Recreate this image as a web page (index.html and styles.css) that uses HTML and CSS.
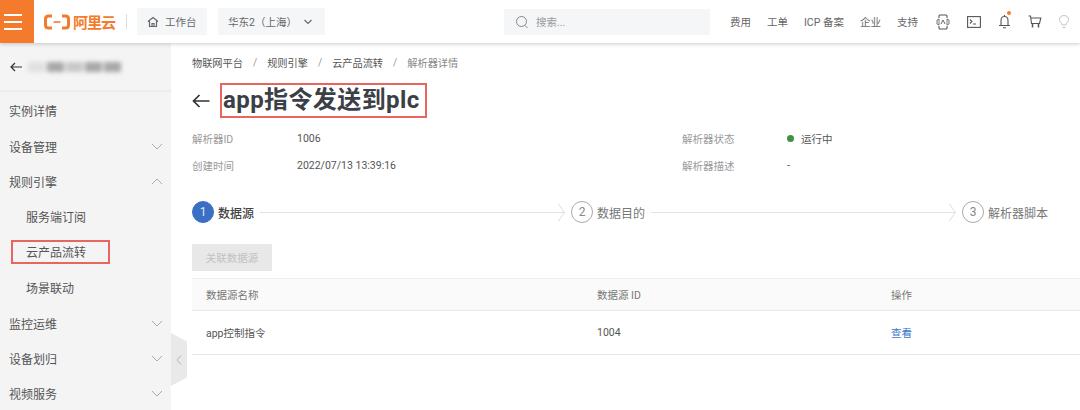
FILE: index.html
```html
<!DOCTYPE html>
<html lang="zh-CN">
<head>
    <meta charset="UTF-8">
    <title>解析器详情</title>
    <link rel="stylesheet" href="styles.css">
</head>
<body>
    <header class="topbar">
        <div class="menu-btn"><span></span><span></span><span></span></div>
        <div class="logo">
            <svg width="26" height="16" viewBox="0 0 26 16" fill="none" stroke="#f47a2c" stroke-width="3">
                <path d="M8 2H4.500Q1.500 2 1.500 5V11Q1.500 14 4.500 14H8"/>
                <path d="M18 2H21.500Q24.500 2 24.500 5V11Q24.500 14 21.500 14H18"/>
                <path d="M9.500 8H16.500" stroke-width="1.600"/>
            </svg>
            <span class="logo-text">阿里云</span>
        </div>
        <div class="logo-sep"></div>
        <div class="top-btn home-btn">
            <svg width="12" height="12" viewBox="0 0 12 12" fill="none" stroke="#666" stroke-width="1.200">
                <path d="M1 5.500L6 1.500L11 5.500M2.500 5V10.500H9.500V5M5 10.500V7.500H7V10.500"/>
            </svg>
            <span>工作台</span>
        </div>
        <div class="top-btn region-btn">
            <span>华东2（上海）</span>
            <svg width="10" height="6" viewBox="0 0 10 6" fill="none" stroke="#666" stroke-width="1.100"><path d="M1.500 1L5 4.500L8.500 1"/></svg>
        </div>
        <div class="search">
            <svg width="14" height="14" viewBox="0 0 14 14" fill="none" stroke="#888" stroke-width="1"><circle cx="6.500" cy="6.500" r="5"/><path d="M10 10.500L12.500 13"/></svg>
            <span>搜索...</span>
        </div>
        <nav class="top-links">
            <span>费用</span>
            <span>工单</span>
            <span>ICP 备案</span>
            <span>企业</span>
            <span>支持</span>
        </nav>
        <div class="top-icons">
            <svg width="14" height="16" viewBox="0 0 14 16" fill="none" stroke="#555" stroke-width="1.100">
                <path d="M3 4V2Q3 1 4 1H10Q11 1 11 2V4M3 12V14Q3 15 4 15H10Q11 15 11 14V12"/>
                <path d="M1 6L3 5V11L1 10ZM13 6L11 5V11L13 10Z" stroke-width=".8"/>
                <path d="M5 10L7 6L9 10" stroke-width=".9"/>
            </svg>
            <svg width="14" height="12" viewBox="0 0 14 12" fill="none" stroke="#555" stroke-width="1.100">
                <rect x=".6" y=".6" width="12.800" height="10.800"/>
                <path d="M3 3.500L5 5.500L3 7.500M6 8H9"/>
            </svg>
            <div class="bell">
                <svg width="13" height="15" viewBox="0 0 13 15" fill="none" stroke="#555" stroke-width="1.100">
                    <path d="M6.500 1V2.500M3 11V6.500Q3 2.500 6.500 2.500Q10 2.500 10 6.500V11M1 11.500H12M5 13.700H8"/>
                </svg>
                <i class="bell-dot"></i>
            </div>
            <svg width="14" height="13" viewBox="0 0 14 13" fill="none" stroke="#555" stroke-width="1.100">
                <path d="M.5 1H2.500L3.500 8.500H11.500L12.800 3H3"/>
                <path d="M4.500 9V12.500M10.500 9V12.500" stroke-width="1.500"/>
            </svg>
            <svg width="10" height="14" viewBox="0 0 10 14" fill="none" stroke="#c4c4c4" stroke-width="1">
                <path d="M3.200 10Q3 8.500 1.800 7.300Q.5 6 .5 4.700Q.5 .6 5 .6Q9.500 .6 9.500 4.700Q9.500 6 8.200 7.300Q7 8.500 6.800 10ZM3.500 12.500H6.500"/>
            </svg>
        </div>
    </header>

    <div class="layout">
        <aside class="sidebar">
            <div class="side-head">
                <svg class="arrow-small" width="12" height="10" viewBox="0 0 12 10" fill="none" stroke="#333" stroke-width="1.200"><path d="M5 1L1 5L5 9M1 5H12"/></svg>
                <div class="blurred"><i></i><i></i><i></i><i></i><i></i></div>
            </div>
            <ul class="side-menu">
                <li class="side-item">实例详情</li>
                <li class="side-item">设备管理<svg class="chev" viewBox="0 0 12 7"><path d="M1 1L6 6L11 1"/></svg></li>
                <li class="side-item">规则引擎<svg class="chev" viewBox="0 0 12 7"><path d="M1 6L6 1L11 6"/></svg></li>
                <li class="side-item sub">服务端订阅</li>
                <li class="side-item sub"><span class="marked">云产品流转</span></li>
                <li class="side-item sub">场景联动</li>
                <li class="side-item">监控运维<svg class="chev" viewBox="0 0 12 7"><path d="M1 1L6 6L11 1"/></svg></li>
                <li class="side-item">设备划归<svg class="chev" viewBox="0 0 12 7"><path d="M1 1L6 6L11 1"/></svg></li>
                <li class="side-item">视频服务<svg class="chev" viewBox="0 0 12 7"><path d="M1 1L6 6L11 1"/></svg></li>
            </ul>
            <div class="collapse-tab">
                <svg width="6" height="10" viewBox="0 0 6 10" fill="none" stroke="#b5b5b5" stroke-width="1"><path d="M5 .5L1 5L5 9.500"/></svg>
            </div>
        </aside>

        <main class="content">
            <div class="breadcrumb">
                <span>物联网平台</span><em>/</em>
                <span>规则引擎</span><em>/</em>
                <span>云产品流转</span><em>/</em>
                <span class="current">解析器详情</span>
            </div>

            <div class="page-title">
                <svg width="18" height="14" viewBox="0 0 18 14" fill="none" stroke="#333" stroke-width="1.700"><path d="M7.500 1L1.500 7L7.500 13M1.500 7H17.500"/></svg>
                <h1>app指令发送到plc</h1>
            </div>

            <div class="meta">
                <div class="meta-row"><label>解析器ID</label><span>1006</span></div>
                <div class="meta-row"><label>解析器状态</label><span class="status"><i></i>运行中</span></div>
                <div class="meta-row"><label>创建时间</label><span>2022/07/13 13:39:16</span></div>
                <div class="meta-row"><label>解析器描述</label><span>-</span></div>
            </div>

            <div class="steps">
                <div class="step-num active">1</div>
                <div class="step-name active">数据源</div>
                <div class="step-line"></div>
                <div class="step-num">2</div>
                <div class="step-name">数据目的</div>
                <div class="step-line"></div>
                <div class="step-num">3</div>
                <div class="step-name">解析器脚本</div>
            </div>

            <button class="link-btn" disabled>关联数据源</button>

            <div class="table">
                <div class="table-row table-head">
                    <span>数据源名称</span><span>数据源 ID</span><span>操作</span>
                </div>
                <div class="table-row">
                    <span>app控制指令</span><span>1004</span><a href="#">查看</a>
                </div>
            </div>
        </main>
    </div>
</body>
</html>
```

FILE: styles.css
```css
* {
    box-sizing: border-box;
}
html, body {
    margin: 0;
    padding: 0;
    height: 410px;
    overflow: hidden;
}
body {
    font-family: Roboto, 'Noto Sans CJK SC', sans-serif;
    font-size: 11px;
    color: #444;
    background: white;
}

/* top bar */
.topbar {
    display: flex;
    align-items: center;
    height: 43px;
    background: white;
    box-shadow: 0 1px 4px rgba(0, 0, 0, 0.2);
    position: relative;
    z-index: 2;
}
.menu-btn {
    width: 34px;
    height: 43px;
    background: #f47a2c;
    display: flex;
    flex-direction: column;
    justify-content: center;
    gap: 5px;
    padding: 0 12px 0 4px;
}
.menu-btn span {
    display: block;
    height: 2px;
    background: white;
}
.logo {
    display: flex;
    align-items: center;
    gap: 3px;
    margin-left: 10px;
}
.logo-text {
    width: 42px;
    font-size: 15px;
    font-weight: 700;
    letter-spacing: -1px;
    color: #f47a2c;
    white-space: nowrap;
}
.logo-sep {
    width: 1px;
    height: 15px;
    background: #ddd;
    margin: 0 10px 0 11px;
}
.top-btn {
    display: flex;
    align-items: center;
    height: 27px;
    background: #f5f6f8;
    color: #666;
    font-size: 10.500px;
}
.home-btn {
    width: 70px;
    padding-left: 10px;
    gap: 6px;
}
.region-btn {
    width: 107px;
    margin-left: 11px;
    padding: 0 12px 0 10px;
    justify-content: space-between;
}
.search {
    display: flex;
    align-items: center;
    gap: 7px;
    width: 206px;
    height: 26px;
    margin-left: 179px;
    padding-left: 11px;
    background: #f5f6f8;
    color: #999;
    font-size: 10.500px;
}
.top-links {
    display: flex;
    gap: 16px;
    margin-left: 20px;
    font-size: 10.500px;
    color: #666;
}
.top-icons {
    display: flex;
    align-items: center;
    gap: 17px;
    margin-left: 18px;
}
.bell {
    position: relative;
    height: 15px;
}
.bell-dot {
    position: absolute;
    top: -3px;
    right: 0;
    width: 4px;
    height: 4px;
    border-radius: 50%;
    background: #f47a2c;
}

/* sidebar */
.layout {
    display: flex;
    height: 367px;
}
.sidebar {
    width: 171px;
    flex-shrink: 0;
    background: #f4f4f4;
    position: relative;
}
.side-head {
    display: flex;
    align-items: center;
    gap: 6px;
    height: 49px;
    padding: 1px 0 0 10px;
    border-bottom: 2px solid #ececec;
}
.blurred {
    display: flex;
    gap: 2px;
    filter: blur(2px);
}
.blurred i {
    display: block;
    width: 17px;
    height: 10px;
    background: #a8a8a8;
}
.blurred i:first-child {
    background: #e0e0e0;
}
.blurred i:nth-child(3) {
    background: #c8c8c8;
}
.side-menu {
    list-style: none;
    margin: 0;
    padding: 1px 0 0;
}
.side-item {
    display: flex;
    align-items: center;
    justify-content: space-between;
    height: 35.400px;
    padding: 0 8px 0 9px;
    font-size: 12px;
    color: #555;
}
.side-item.sub {
    padding-left: 26px;
}
.marked {
    display: flex;
    align-items: center;
    width: 99px;
    height: 24px;
    margin-left: -15px;
    padding-left: 13px;
    padding-bottom: 1px;
    border: 2px solid #e8665f;
}
.chev {
    width: 12px;
    height: 7px;
    fill: none;
    stroke: #aaa;
    stroke-width: 1;
}
.collapse-tab {
    position: absolute;
    left: 171px;
    top: 290px;
    width: 16px;
    height: 53px;
    display: flex;
    align-items: center;
    justify-content: center;
    background: #e9e9e9;
    clip-path: polygon(0 0, 100% 16%, 100% 84%, 0 100%);
}

/* main */
.content {
    flex: 1;
    padding-left: 21px;
    min-width: 0;
}
.breadcrumb {
    display: flex;
    align-items: center;
    height: 14px;
    margin-top: 12px;
    font-size: 10.200px;
    color: #555;
}
.breadcrumb em {
    font-style: normal;
    color: #999;
    margin: 0 10px;
}
.breadcrumb .current {
    color: #888;
}
.page-title {
    display: flex;
    align-items: center;
    gap: 10px;
    margin-top: 14px;
    height: 35px;
}
.page-title h1 {
    margin: 0;
    width: 207px;
    height: 35px;
    line-height: 31px;
    font-size: 24px;
    font-weight: 700;
    letter-spacing: 0.4px;
    color: #3a4046;
    border: 2px solid #e8665f;
    padding-left: 1px;
    white-space: nowrap;
}
.meta {
    display: grid;
    grid-template-columns: 490px 1fr;
    row-gap: 9px;
    margin-top: 11px;
}
.meta-row {
    display: flex;
    align-items: center;
    height: 18px;
    font-size: 10.500px;
}
.meta-row label {
    width: 105px;
    color: #999;
}
.meta-row span {
    color: #555;
}
.status {
    display: flex;
    align-items: center;
    gap: 7px;
}
.status i {
    width: 7px;
    height: 7px;
    border-radius: 50%;
    background: #3f9142;
}
.steps {
    display: flex;
    align-items: center;
    height: 22px;
    margin-top: 27px;
    padding-right: 32px;
}
.step-num {
    flex-shrink: 0;
    width: 22px;
    height: 22px;
    display: flex;
    align-items: center;
    justify-content: center;
    border: 1px solid #aaa;
    border-radius: 50%;
    font-size: 12px;
    color: #888;
}
.step-num.active {
    background: #3b6fc4;
    border-color: #3b6fc4;
    color: #dfe8f7;
}
.step-name {
    margin-left: 4px;
    font-size: 12px;
    color: #777;
    white-space: nowrap;
}
.step-name.active {
    color: #444;
    font-weight: 500;
}
.step-line {
    flex: 1;
    height: 1px;
    margin: 0 6px;
    background: #e2e2e2;
    position: relative;
}
.step-line::after {
    content: "";
    position: absolute;
    right: 1px;
    top: -5px;
    width: 10px;
    height: 10px;
    border-top: 1px solid #e2e2e2;
    border-right: 1px solid #e2e2e2;
    transform: rotate(45deg) skew(10deg, 10deg);
}
.link-btn {
    display: block;
    width: 80px;
    height: 27px;
    margin-top: 21px;
    border: none;
    background: #e8e8e8;
    color: #c2c2c2;
    font-family: inherit;
    font-size: 10.500px;
}
.table {
    margin-top: 7px;
}
.table-row {
    display: grid;
    grid-template-columns: 391px 294px 1fr;
    align-items: center;
    height: 44px;
    padding-left: 14px;
    border-bottom: 1px solid #e8e8e8;
    font-size: 10.500px;
    color: #555;
}
.table-head {
    height: 33px;
    background: #fafafa;
    border-top: 1px solid #eee;
    color: #777;
}
.table-row a {
    color: #3b78c9;
    text-decoration: none;
}
```
